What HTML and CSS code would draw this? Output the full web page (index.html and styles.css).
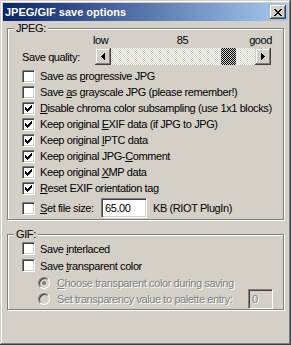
FILE: index.html
```html
<!DOCTYPE html>
<html lang="en">
<head>
    <meta charset="UTF-8">
    <title>JPEG/GIF save options</title>
    <link rel="stylesheet" href="styles.css">
</head>
<body>
    <div class="window">
        <div class="titlebar">
            <span class="title">JPEG/GIF save options</span>
            <span class="close">
                <svg width="8" height="7" shape-rendering="crispEdges">
                    <path d="M0 0h2v1h-2z M6 0h2v1h-2z M1 1h2v1h-2z M5 1h2v1h-2z M2 2h4v1h-4z M3 3h2v1h-2z M2 4h4v1h-4z M1 5h2v1h-2z M5 5h2v1h-2z M0 6h2v1h-2z M6 6h2v1h-2z"/>
                </svg>
            </span>
        </div>

        <div class="client">
            <fieldset class="group">
                <legend>JPEG:</legend>
                <div class="group-body">
                    <div class="scale"><span class="low">low</span><span class="value">85</span><span class="high">good</span></div>
                    <div class="slider-row">
                        <span class="quality-label">Save quality:</span>
                        <div class="scrollbar">
                            <span class="sb-btn">
                                <svg width="4" height="7" shape-rendering="crispEdges"><path d="M0 3h1v1h-1z M1 2h1v3h-1z M2 1h1v5h-1z M3 0h1v7h-1z"/></svg>
                            </span>
                            <div class="track">
                                <span class="thumb" style="margin-left: 110px"></span>
                            </div>
                            <span class="sb-btn">
                                <svg width="4" height="7" shape-rendering="crispEdges"><path d="M3 3h1v1h-1z M2 2h1v3h-1z M1 1h1v5h-1z M0 0h1v7h-1z"/></svg>
                            </span>
                        </div>
                    </div>

                    <label class="check"><span class="box"></span><span>Save as <u>p</u>rogressive JPG</span></label>
                    <label class="check"><span class="box"></span><span>Save <u>a</u>s grayscale JPG (please remember!)</span></label>
                    <label class="check"><span class="box checked"><svg width="7" height="7" shape-rendering="crispEdges"><path d="M0 2h1v3h-1z M1 3h1v3h-1z M2 4h1v3h-1z M3 3h1v3h-1z M4 2h1v3h-1z M5 1h1v3h-1z M6 0h1v3h-1z"/></svg></span><span><u>D</u>isable chroma color subsampling (use 1x1 blocks)</span></label>
                    <label class="check"><span class="box checked"><svg width="7" height="7" shape-rendering="crispEdges"><path d="M0 2h1v3h-1z M1 3h1v3h-1z M2 4h1v3h-1z M3 3h1v3h-1z M4 2h1v3h-1z M5 1h1v3h-1z M6 0h1v3h-1z"/></svg></span><span>Keep original <u>E</u>XIF data (if JPG to JPG)</span></label>
                    <label class="check"><span class="box checked"><svg width="7" height="7" shape-rendering="crispEdges"><path d="M0 2h1v3h-1z M1 3h1v3h-1z M2 4h1v3h-1z M3 3h1v3h-1z M4 2h1v3h-1z M5 1h1v3h-1z M6 0h1v3h-1z"/></svg></span><span>Keep original <u>I</u>PTC data</span></label>
                    <label class="check"><span class="box checked"><svg width="7" height="7" shape-rendering="crispEdges"><path d="M0 2h1v3h-1z M1 3h1v3h-1z M2 4h1v3h-1z M3 3h1v3h-1z M4 2h1v3h-1z M5 1h1v3h-1z M6 0h1v3h-1z"/></svg></span><span>Keep original JPG-<u>C</u>omment</span></label>
                    <label class="check"><span class="box checked"><svg width="7" height="7" shape-rendering="crispEdges"><path d="M0 2h1v3h-1z M1 3h1v3h-1z M2 4h1v3h-1z M3 3h1v3h-1z M4 2h1v3h-1z M5 1h1v3h-1z M6 0h1v3h-1z"/></svg></span><span>Keep original <u>X</u>MP data</span></label>
                    <label class="check"><span class="box checked"><svg width="7" height="7" shape-rendering="crispEdges"><path d="M0 2h1v3h-1z M1 3h1v3h-1z M2 4h1v3h-1z M3 3h1v3h-1z M4 2h1v3h-1z M5 1h1v3h-1z M6 0h1v3h-1z"/></svg></span><span><u>R</u>eset EXIF orientation tag</span></label>

                    <div class="check filesize">
                        <span class="box"></span>
                        <span class="filesize-label"><u>S</u>et file size:</span>
                        <span class="edit size-edit">65.00</span>
                        <span class="unit">KB (RIOT PlugIn)</span>
                    </div>
                </div>
            </fieldset>

            <fieldset class="group gif">
                <legend>GIF:</legend>
                <div class="group-body">
                    <label class="check"><span class="box"></span><span>Save <u>i</u>nterlaced</span></label>
                    <label class="check"><span class="box"></span><span>Save <u>t</u>ransparent color</span></label>
                    <label class="option disabled"><span class="radio"><span class="dot"></span></span><span><u>C</u>hoose transparent color during saving</span></label>
                    <div class="option disabled palette">
                        <span class="radio"></span>
                        <span class="palette-label">Set transparency value to palette entry:</span>
                        <span class="edit palette-edit">0</span>
                    </div>
                </div>
            </fieldset>
        </div>
    </div>
</body>
</html>
```

FILE: styles.css
```css
body {
    margin: 0;
    font-family: "Liberation Sans", Arial, sans-serif;
    font-size: 11px;
    letter-spacing: -0.4px;
    white-space: nowrap;
    color: #000;
}

.window {
    width: 291px;
    height: 345px;
    box-sizing: border-box;
    padding: 3px;
    background-color: #d4d0c8;
    box-shadow: inset -1px -1px #404040, inset 1px 1px #d4d0c8, inset -2px -2px #808080, inset 2px 2px #fff;
}

.titlebar {
    height: 18px;
    display: flex;
    align-items: center;
    justify-content: space-between;
    padding: 0 2px;
    background: linear-gradient(to right, #0a246a, #a6caf0);
    color: #fff;
    font-weight: bold;
    letter-spacing: 0;
}

.close {
    width: 16px;
    height: 14px;
    box-sizing: border-box;
    display: flex;
    align-items: center;
    justify-content: center;
    background-color: #d4d0c8;
    box-shadow: inset -1px -1px #404040, inset 1px 1px #fff, inset -2px -2px #808080;
}

.client {
    padding: 0 4px;
}

.group {
    margin: 1px 0 0;
    padding: 0 0 1px 6px;
    border: 1px solid #808080;
    box-shadow: inset 1px 1px #fff, 1px 1px #fff;
    min-width: 0;
}

.group legend {
    padding: 0 2px;
    line-height: 12px;
    background-color: #d4d0c8;
}

.group-body {
    padding-left: 8px;
}

.gif {
    margin-top: 8px;
    padding-bottom: 0;
}

/* quality slider */
.scale {
    display: grid;
    grid-template-columns: 1fr auto 1fr;
    width: 179px;
    margin-left: 71px;
    height: 12px;
    line-height: 12px;
}

.scale .high {
    justify-self: end;
}

.slider-row {
    display: flex;
    align-items: center;
    margin-top: 2px;
}

.quality-label {
    width: 73px;
}

.scrollbar {
    width: 176px;
    height: 17px;
    display: flex;
}

.sb-btn {
    width: 16px;
    height: 17px;
    box-sizing: border-box;
    display: flex;
    align-items: center;
    justify-content: center;
    background-color: #d4d0c8;
    box-shadow: inset -1px -1px #404040, inset 1px 1px #d4d0c8, inset -2px -2px #808080, inset 2px 2px #fff;
}

.track {
    flex: 1;
    display: flex;
    background: repeating-conic-gradient(#d4d0c8 0 25%, #fff 0 50%) 0 0 / 2px 2px;
}

.thumb {
    width: 15px;
    height: 17px;
    background: repeating-conic-gradient(#000 0 25%, #d4d0c8 0 50%) 0 0 / 2px 2px;
}

/* checkboxes */
.check {
    display: flex;
    align-items: center;
    gap: 5px;
    height: 16px;
}

.slider-row + .check {
    margin-top: 3px;
}

.box {
    width: 13px;
    height: 13px;
    box-sizing: border-box;
    display: flex;
    align-items: center;
    justify-content: center;
    background-color: #fff;
    border: 1px solid;
    border-color: #808080 #fff #fff #808080;
    box-shadow: inset 1px 1px #404040, inset -1px -1px #d4d0c8;
    flex: none;
}

.filesize {
    height: 20px;
    margin-top: 2px;
    gap: 0;
}

.filesize .box {
    margin-right: 5px;
}

.filesize-label {
    width: 61px;
}

.edit {
    height: 20px;
    box-sizing: border-box;
    padding: 3px 0 0 3px;
    line-height: 13px;
    background-color: #fff;
    border: 1px solid;
    border-color: #808080 #fff #fff #808080;
    box-shadow: inset 1px 1px #404040, inset -1px -1px #d4d0c8;
}

.size-edit {
    width: 46px;
}

.unit {
    margin-left: 6px;
}

.gif .check {
    height: 17px;
}

/* radio options */
.option {
    display: flex;
    align-items: center;
    gap: 7px;
    height: 17px;
    padding-left: 16px;
}

.disabled {
    color: #808080;
    text-shadow: 1px 1px #fff;
}

.radio {
    width: 12px;
    height: 12px;
    box-sizing: border-box;
    border-radius: 50%;
    border: 1px solid;
    border-color: #808080 #fff #fff #808080;
    box-shadow: inset 1px 1px #404040, inset -1px -1px #d4d0c8;
    background-color: #d4d0c8;
    display: flex;
    align-items: center;
    justify-content: center;
    flex: none;
}

.dot {
    width: 4px;
    height: 4px;
    border-radius: 50%;
    background-color: #808080;
}

.palette {
    height: 20px;
    margin-top: -2px;
    gap: 0;
}

.palette .radio {
    margin-right: 7px;
}

.palette-label {
    width: 191px;
}

.palette-edit {
    width: 25px;
    background-color: #d4d0c8;
}
```
